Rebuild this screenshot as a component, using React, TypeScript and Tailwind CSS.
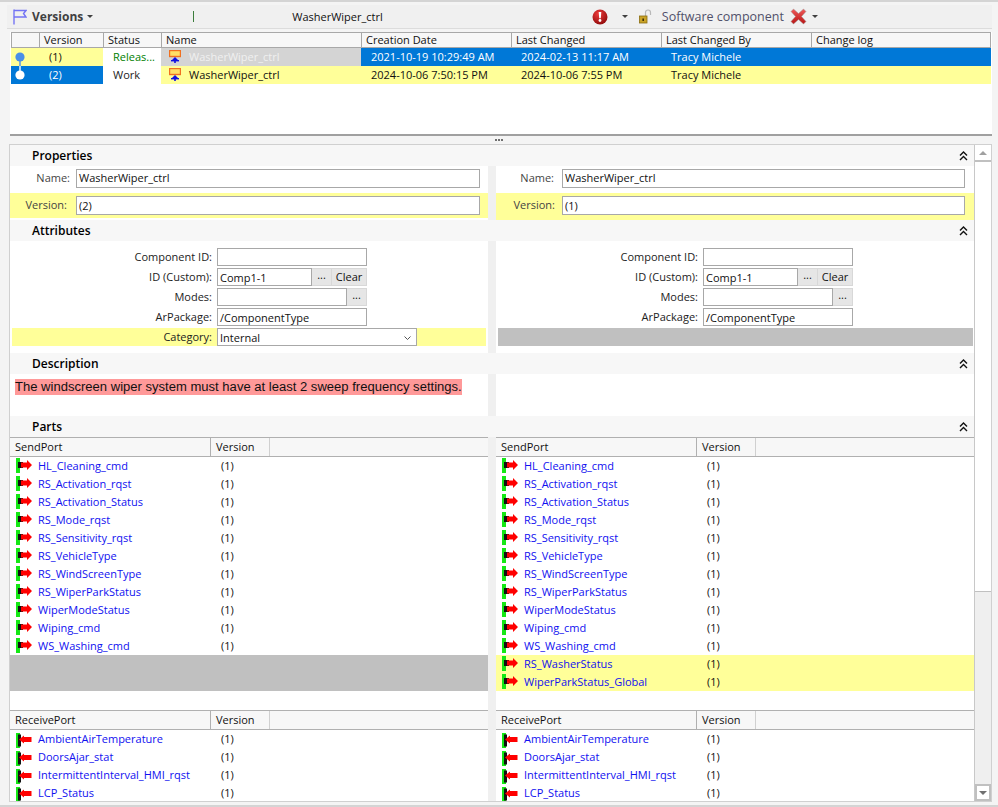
import React from "react";

const colW = ["w-[28px]", "w-[64px]", "w-[58px]", "w-[200px]", "w-[150px]", "w-[150px]", "w-[150px]", "flex-1"];
const headers = ["", "Version", "Status", "Name", "Creation Date", "Last Changed", "Last Changed By", "Change log"];

const sendPorts = [
  "HL_Cleaning_cmd",
  "RS_Activation_rqst",
  "RS_Activation_Status",
  "RS_Mode_rqst",
  "RS_Sensitivity_rqst",
  "RS_VehicleType",
  "RS_WindScreenType",
  "RS_WiperParkStatus",
  "WiperModeStatus",
  "Wiping_cmd",
  "WS_Washing_cmd",
];
const extraPorts = ["RS_WasherStatus", "WiperParkStatus_Global"];
const receivePorts = ["AmbientAirTemperature", "DoorsAjar_stat", "IntermittentInterval_HMI_rqst", "LCP_Status"];

function Caret() {
  return <div className="w-0 h-0 border-x-[3px] border-x-transparent border-t-[3px] border-t-[#404040]" />;
}

function FlagIcon() {
  return (
    <svg width="14" height="16" viewBox="0 0 14 16" fill="none" stroke="#7474f4" strokeWidth="1.4">
      <path d="M1 0.5V15.5" />
      <path d="M1 1.5H13L10.5 4.5L13 8H1" />
    </svg>
  );
}

function ErrorIcon() {
  return (
    <svg width="16" height="16" viewBox="0 0 16 16">
      <defs>
        <radialGradient id="err" cx="40%" cy="30%" r="75%">
          <stop offset="0" stopColor="#ee3b3b" />
          <stop offset="1" stopColor="#8e0a0a" />
        </radialGradient>
      </defs>
      <circle cx="8" cy="8" r="7.5" fill="url(#err)" />
      <path d="M6.7 3H9.3L8.8 9.2H7.2Z" fill="#fff" />
      <circle cx="8" cy="11.5" r="1.4" fill="#fff" />
    </svg>
  );
}

function LockIcon() {
  return (
    <svg width="13" height="15" viewBox="0 0 13 15" fill="none">
      <path d="M6.5 7V3.5C6.5 2 7.5 1 9 1C10.5 1 11.5 2 11.5 3.5V6" stroke="#b8b8b8" strokeWidth="1.2" />
      <rect x="0.5" y="7" width="7.5" height="7" fill="#c9a227" stroke="#8a6d10" strokeWidth="0.8" />
      <rect x="3.4" y="9.5" width="1.6" height="2.5" fill="#3d2f05" />
    </svg>
  );
}

function CloseIcon() {
  return (
    <svg width="17" height="17" viewBox="0 0 17 17">
      <defs>
        <linearGradient id="xred" x1="0" y1="0" x2="0" y2="1">
          <stop offset="0" stopColor="#f05a5a" />
          <stop offset="1" stopColor="#b81414" />
        </linearGradient>
      </defs>
      <path
        d="M1 3.5L3.5 1L8.5 5.5L13.5 1L16 3.5L11.5 8.5L16 13.5L13.5 16L8.5 11.5L3.5 16L1 13.5L5.5 8.5Z"
        fill="url(#xred)"
        stroke="#9a9a9a"
        strokeWidth="0.5"
      />
    </svg>
  );
}

function ComponentIcon() {
  return (
    <svg width="12" height="13" viewBox="0 0 12 13" className="shrink-0">
      <rect x="0.5" y="0.5" width="11" height="6" fill="#ffe066" stroke="#f07020" strokeWidth="1.4" />
      <path d="M6 7L9 10H3Z" fill="#1010e0" />
      <rect x="2" y="10" width="8" height="1.4" fill="#1010e0" />
      <rect x="5.2" y="10" width="1.6" height="3" fill="#1010e0" />
    </svg>
  );
}

function Node({ fill, line, up }: { fill: string; line: string; up?: boolean }) {
  return (
    <svg width="12" height="18" viewBox="0 0 12 18" className="ml-[3px]">
      <path d={up ? "M6 0V9" : "M6 9V18"} stroke={line} strokeWidth="1.4" />
      <circle cx="6" cy="9" r="4.6" fill={fill} />
    </svg>
  );
}

function PortIcon({ receive }: { receive?: boolean }) {
  if (receive) {
    return (
      <svg width="18" height="15" viewBox="0 0 18 15" className="shrink-0 self-start mt-[3px]">
        <rect x="0" y="0" width="4" height="15" fill="#14e814" />
        <rect x="2" y="1.5" width="3" height="12" fill="#111" />
        <path d="M3 6.5L8 2.5V4H15.5V9H8V10.5Z" fill="#f00" />
      </svg>
    );
  }
  return (
    <svg width="18" height="15" viewBox="0 0 18 15" className="shrink-0 self-start mt-[1px]">
      <rect x="0" y="0" width="4" height="15" fill="#14e814" />
      <rect x="2" y="4" width="5" height="6" fill="#111" />
      <path d="M5 4.5H11V2L16 7L11 12V9.5H5Z" fill="#f00" />
    </svg>
  );
}

function Chevrons() {
  return (
    <svg width="9" height="10" viewBox="0 0 9 10" fill="none" stroke="#111" strokeWidth="1.4">
      <path d="M1 4.5L4.5 1L8 4.5" />
      <path d="M1 9L4.5 5.5L8 9" />
    </svg>
  );
}

function SectionHeader({ title, className = "" }: { title: string; className?: string }) {
  return (
    <div className={`h-[21px] shrink-0 bg-[#f7f7f7] flex items-center justify-between pl-[22px] pr-[6px] ${className}`}>
      <span className="font-semibold text-[12px] text-black">{title}</span>
      <Chevrons />
    </div>
  );
}

function Box({ className = "", children }: { className?: string; children?: React.ReactNode }) {
  return (
    <div className={`h-[18px] bg-white border border-[#a8a8a8] flex items-center pl-[2px] text-[#111] overflow-hidden ${className}`}>
      {children}
    </div>
  );
}

function SmallButton({ label, className = "" }: { label: string; className?: string }) {
  return (
    <div className={`h-[18px] bg-[#e6e6e6] border-y border-r border-[#d8d8d8] flex items-center justify-center text-[#111] ${className}`}>
      {label}
    </div>
  );
}

function AttrRow({ label, children }: { label: string; children: React.ReactNode }) {
  return (
    <div className="flex items-center h-[18px]">
      <div className="w-[202px] pb-px text-right text-[#222]">{label}</div>
      <div className="ml-[5px] flex">{children}</div>
    </div>
  );
}

function Attributes() {
  return (
    <div className="pt-[7px] flex flex-col gap-[2px]">
      <AttrRow label="Component ID:">
        <Box className="w-[150px]" />
      </AttrRow>
      <AttrRow label="ID (Custom):">
        <Box className="w-[95px] pt-px">Comp1-1</Box>
        <SmallButton label="..." className="w-[20px] pb-[5px]" />
        <SmallButton label="Clear" className="w-[35px] pb-px" />
      </AttrRow>
      <AttrRow label="Modes:">
        <Box className="w-[130px]" />
        <SmallButton label="..." className="w-[20px] pb-[5px]" />
      </AttrRow>
      <AttrRow label="ArPackage:">
        <Box className="w-[150px] pt-px">/ComponentType</Box>
      </AttrRow>
    </div>
  );
}

function PortHeader({ title }: { title: string }) {
  return (
    <div className="flex h-[20px] shrink-0 bg-[#f7f7f7] border-y border-[#b0b0b0] text-[#111]">
      <div className="w-[201px] pl-[5px] pb-px border-r border-[#b0b0b0] flex items-center">{title}</div>
      <div className="w-[59px] pl-[5px] pb-px border-r border-[#d0d0d0] flex items-center">Version</div>
    </div>
  );
}

function PortRow({ name, receive, highlight }: { name: string; receive?: boolean; highlight?: boolean }) {
  return (
    <div className={`flex items-center h-[18px] pl-[6px] pb-px ${highlight ? "bg-[#ffff99]" : ""}`}>
      <PortIcon receive={receive} />
      <div className="w-[187px] pl-[4px] text-[#1010f0] truncate">{name}</div>
      <div className="text-[#111]">(1)</div>
    </div>
  );
}

function PartsColumn({ right }: { right?: boolean }) {
  return (
    <div className="flex flex-col">
      <PortHeader title="SendPort" />
      {sendPorts.map((p) => (
        <PortRow key={p} name={p} />
      ))}
      {right ? (
        extraPorts.map((p) => <PortRow key={p} name={p} highlight />)
      ) : (
        <div className="h-[36px] bg-[#c0c0c0]" />
      )}
      <div className="h-[19px]" />
      <PortHeader title="ReceivePort" />
      {receivePorts.map((p) => (
        <PortRow key={p} name={p} receive />
      ))}
    </div>
  );
}

function VersionsTable() {
  return (
    <div className="h-[104px] ml-[10px] mr-[6px] bg-white border-b-2 border-[#a0a0a0] shrink-0">
      <div className="flex h-[16px] ml-px mr-px bg-[#f7f7f7] border border-[#a8a8a8] text-[#111]">
        {headers.map((h, i) => (
          <div key={i} className={`${colW[i]} pl-[4px] pb-px flex items-center ${i < 7 ? "border-r border-[#a8a8a8]" : ""}`}>
            {h}
          </div>
        ))}
      </div>
      <div className="flex h-[18px] ml-px mr-px">
        <div className="w-[28px] bg-[#ffff99]">
          <Node fill="#4a8fe8" line="#4a8fe8" />
        </div>
        <div className="w-[64px] pl-[10px] pb-px bg-[#ffff99] flex items-center text-[#111]">(1)</div>
        <div className="w-[58px] pl-[10px] pb-px flex items-center text-[#008000]">Releas...</div>
        <div className="w-[200px] pl-[8px] pb-px bg-[#d4d4d4] flex items-center gap-[8px] text-[#f0f0f0]">
          <ComponentIcon />
          WasherWiper_ctrl
        </div>
        <div className="flex-1 flex pb-px bg-[#0078d7] text-white">
          <div className="w-[150px] pl-[10px] flex items-center">2021-10-19 10:29:49 AM</div>
          <div className="w-[150px] pl-[10px] flex items-center">2024-02-13 11:17 AM</div>
          <div className="w-[150px] pl-[10px] flex items-center">Tracy Michele</div>
        </div>
      </div>
      <div className="flex h-[18px] ml-px mr-px">
        <div className="w-[28px] bg-[#0078d7]">
          <Node fill="#ffffff" line="#ffffff" up />
        </div>
        <div className="w-[64px] pl-[10px] pb-px bg-[#0078d7] flex items-center text-white">(2)</div>
        <div className="w-[58px] pl-[10px] pb-px flex items-center text-[#222]">Work</div>
        <div className="flex-1 flex pb-px bg-[#ffff99] text-[#111]">
          <div className="w-[200px] pl-[8px] flex items-center gap-[8px]">
            <ComponentIcon />
            WasherWiper_ctrl
          </div>
          <div className="w-[150px] pl-[10px] flex items-center">2024-10-06 7:50:15 PM</div>
          <div className="w-[150px] pl-[10px] flex items-center">2024-10-06 7:55 PM</div>
          <div className="w-[150px] pl-[10px] flex items-center">Tracy Michele</div>
        </div>
      </div>
    </div>
  );
}

export default function App() {
  return (
    <div className="w-[998px] h-[807px] overflow-hidden flex flex-col bg-[#f4f4f4] border-y-2 border-[#d4d4d4] font-['Open_Sans',sans-serif] text-[11px] leading-[14px]">
      {/* toolbar */}
      <div className="mt-[3px] ml-[7px] mr-[6px] h-[24px] shrink-0 bg-[#f0f0f0] border-b border-[#dcdcdc] flex items-center pl-[6px]">
        <FlagIcon />
        <span className="ml-[5px] mt-px font-bold text-[12px] text-[#404040]">Versions</span>
        <div className="ml-[4px]">
          <Caret />
        </div>
        <div className="ml-[100px] w-px h-[11px] bg-[#3c7d3c]" />
        <span className="ml-[98px] text-[#111]">WasherWiper_ctrl</span>
        <div className="ml-[209px]">
          <ErrorIcon />
        </div>
        <div className="ml-[14px]">
          <Caret />
        </div>
        <div className="ml-[11px]">
          <LockIcon />
        </div>
        <span className="ml-[10px] text-[12.5px] text-[#50506a]">Software component</span>
        <div className="ml-[6px]">
          <CloseIcon />
        </div>
        <div className="ml-[5px]">
          <Caret />
        </div>
      </div>

      <div className="h-[3px] shrink-0" />
      <VersionsTable />

      {/* splitter */}
      <div className="h-[8px] shrink-0 flex items-center justify-center gap-px">
        <div className="size-[2px] bg-[#707070]" />
        <div className="size-[2px] bg-[#707070]" />
        <div className="size-[2px] bg-[#707070]" />
      </div>

      {/* compare panel */}
      <div className="h-[658px] ml-[9px] mr-[6px] flex bg-white border-l border-y border-[#d0d0d0] overflow-hidden shrink-0 border-r">
        <div className="w-[965px] flex flex-col">
          <SectionHeader title="Properties" />
          <div className="flex h-[54px] shrink-0">
            <div className="w-[478px]">
              <div className="h-[27px] pb-[2px] flex items-center">
                <div className="w-[60px] pb-px text-right text-[#444]">Name:</div>
                <Box className="ml-[6px] w-[404px] h-[19px] pb-px">WasherWiper_ctrl</Box>
              </div>
              <div className="h-[25px] bg-[#ffff99] flex items-center">
                <div className="w-[57px] pb-px text-right text-[#444]">Version:</div>
                <Box className="ml-[9px] w-[404px] h-[19px]">(2)</Box>
              </div>
            </div>
            <div className="w-[8px] bg-[#f0f0f0]" />
            <div className="flex-1">
              <div className="h-[27px] pb-[2px] flex items-center">
                <div className="w-[58px] pb-px text-right text-[#444]">Name:</div>
                <Box className="ml-[8px] w-[403px] h-[19px] pb-px">WasherWiper_ctrl</Box>
              </div>
              <div className="h-[27px] pb-[2px] bg-[#ffff99] flex items-center">
                <div className="w-[59px] pb-px text-right text-[#444]">Version:</div>
                <Box className="ml-[7px] w-[403px] h-[19px]">(1)</Box>
              </div>
            </div>
          </div>

          <SectionHeader title="Attributes" />
          <div className="flex h-[112px] shrink-0">
            <div className="w-[478px]">
              <Attributes />
              <div className="mt-[2px] ml-[2px] w-[474px] h-[18px] bg-[#ffff99] flex items-center">
                <div className="w-[200px] pb-px text-right text-[#222]">Category:</div>
                <Box className="ml-[5px] w-[200px] justify-between pr-[5px] pt-px">
                  Internal
                  <svg width="7" height="4" viewBox="0 0 7 4" fill="none" stroke="#555">
                    <path d="M0.5 0.5L3.5 3.5L6.5 0.5" />
                  </svg>
                </Box>
              </div>
            </div>
            <div className="w-[8px] bg-[#f0f0f0]" />
            <div className="flex-1">
              <Attributes />
              <div className="mt-[2px] ml-[2px] w-[475px] h-[18px] bg-[#c0c0c0]" />
            </div>
          </div>

          <SectionHeader title="Description" />
          <div className="flex h-[42px] shrink-0">
            <div className="w-[478px] pt-[5px] pl-[5px]">
              <span className="inline-block h-[16px] leading-[16px] bg-[#ff9999] font-['Liberation_Sans',sans-serif] text-[13.06px] text-[#111] whitespace-nowrap">
                The windscreen wiper system must have at least 2 sweep frequency settings.
              </span>
            </div>
            <div className="w-[8px] bg-[#f0f0f0]" />
            <div className="flex-1" />
          </div>

          <SectionHeader title="Parts" />
          <div className="flex flex-1 min-h-0">
            <div className="w-[478px]">
              <PartsColumn />
            </div>
            <div className="w-[8px] bg-[#f0f0f0]" />
            <div className="flex-1">
              <PartsColumn right />
            </div>
          </div>
        </div>

        {/* scrollbar */}
        <div className="w-[17px] flex flex-col bg-[#efefef] border-l border-[#c8c8c8]">
          <div className="h-[17px] bg-white border-b-2 border-[#c0c0c0] flex items-center justify-center">
            <div className="w-0 h-0 border-x-[4px] border-x-transparent border-b-[4px] border-b-[#a0a0a0]" />
          </div>
          <div className="h-[430px] bg-white border-b border-[#c0c0c0]" />
          <div className="flex-1" />
          <div className="h-[17px] bg-white border-2 border-[#c0c0c0] flex items-center justify-center">
            <div className="w-0 h-0 border-x-[4px] border-x-transparent border-t-[4px] border-t-[#707070]" />
          </div>
        </div>
      </div>
    </div>
  );
}
